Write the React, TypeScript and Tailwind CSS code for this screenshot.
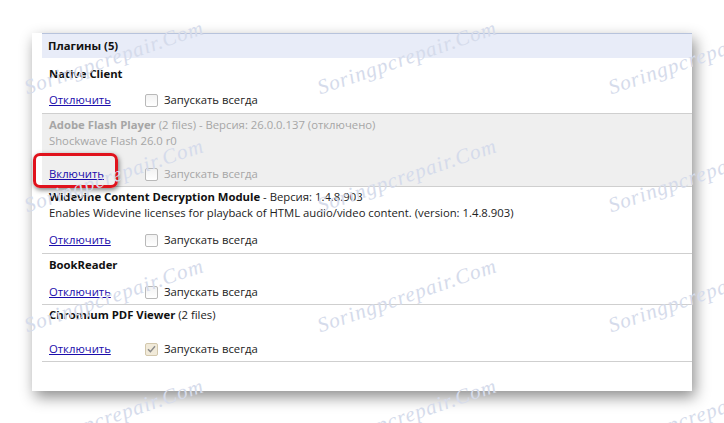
import React from "react";

type Plugin = {
  name: string;
  extra?: string;
  desc?: string;
  disabled?: boolean;
  checked?: boolean;
  pad: string;
  gap: string;
};

const plugins: Plugin[] = [
  { name: "Native Client", pad: "pt-[8px] pb-[5px]", gap: "mt-[10px]" },
  {
    name: "Adobe Flash Player",
    extra: " (2 files) - Версия: 26.0.0.137 (отключено)",
    desc: "Shockwave Flash 26.0 r0",
    disabled: true,
    pad: "pt-[3px] pb-[4px]",
    gap: "mt-[17px]",
  },
  {
    name: "Widevine Content Decryption Module",
    extra: " - Версия: 1.4.8.903",
    desc: "Enables Widevine licenses for playback of HTML audio/video content. (version: 1.4.8.903)",
    pad: "pt-[2px] pb-[5px]",
    gap: "mt-[11px]",
  },
  { name: "BookReader", pad: "pt-[3px] pb-[4px]", gap: "mt-[11px]" },
  {
    name: "Chromium PDF Viewer",
    extra: " (2 files)",
    checked: true,
    pad: "pt-[2px] pb-[4px]",
    gap: "mt-[18px]",
  },
];

function Checkbox({ checked }: { checked?: boolean }) {
  return (
    <span
      className={`flex h-[13px] w-[13px] items-center justify-center rounded-[2px] border ${
        checked
          ? "border-[#d3c8ad] bg-[#f1ead9]"
          : "border-[#b9b9b9] bg-gradient-to-b from-[#f2f2f2] to-white"
      }`}
    >
      {checked && (
        <svg width="9" height="8" viewBox="0 0 9 8">
          <path d="M1 4.2 L3.4 6.6 L8 1.2" fill="none" stroke="#8a8a8a" strokeWidth="1.4" />
        </svg>
      )}
    </span>
  );
}

// watermark start points (left end of the text baseline)
const marks: { x: number; y: number }[] = [];
for (const y of [92, 210, 330, 450]) {
  for (const x of [25, 318, 609]) marks.push({ x, y });
}

export default function App() {
  return (
    <div
      className="relative h-[423px] w-[724px] overflow-hidden bg-white text-[11.3px] text-[#222]"
      style={{ fontFamily: "'Open Sans', 'Noto Sans', sans-serif" }}
    >
      <div className="pl-[32px] pt-[32px]">
        <div className="h-[358px] w-[660px] bg-white pl-[10px] shadow-[3px_6px_14px_rgba(0,0,0,0.45)]">
          <div className="mt-[1px] flex h-[25px] items-center border-t border-[#b7c3dc] bg-[#e8ecf8] pl-[6px] font-bold text-[#111]">
            Плагины (5)
          </div>
          {plugins.map((p) => (
            <div
              key={p.name}
              className={`border-b border-[#cfcfcf] pl-[7px] leading-[16px] ${p.pad} ${
                p.disabled ? "bg-[#efefef] text-[#a6a6a6]" : ""
              }`}
            >
              <div>
                <span className={`font-bold ${p.disabled ? "text-[#a6a6a6]" : "text-[#111]"}`}>{p.name}</span>
                {p.extra}
              </div>
              {p.desc && <div>{p.desc}</div>}
              <div className={`flex items-center ${p.gap}`}>
                <span className="w-[96px] text-[#1a0dab] underline">
                  {p.disabled ? "Включить" : "Отключить"}
                </span>
                <Checkbox checked={p.checked} />
                <span className={`ml-[6px] ${p.disabled ? "text-[#a6a6a6]" : "text-[#222]"}`}>
                  Запускать всегда
                </span>
              </div>
            </div>
          ))}
        </div>
      </div>

      {/* red highlight around the enable link */}
      <div className="pointer-events-none absolute left-[33px] top-[153px] h-[35px] w-[85px] rounded-[7px] border-[3px] border-[#e0121c] shadow-[1px_2px_5px_rgba(0,0,0,0.5)]" />

      {/* watermark */}
      {marks.map((m, i) => (
        <span
          key={i}
          className="pointer-events-none absolute origin-left -rotate-[19deg] whitespace-nowrap text-[21px] leading-[20px] italic tracking-[1px] text-[#d5dbeb]"
          style={{ left: m.x, top: m.y - 14, fontFamily: "'Liberation Serif', serif" }}
        >
          Soringpcrepair.Com
        </span>
      ))}
    </div>
  );
}
